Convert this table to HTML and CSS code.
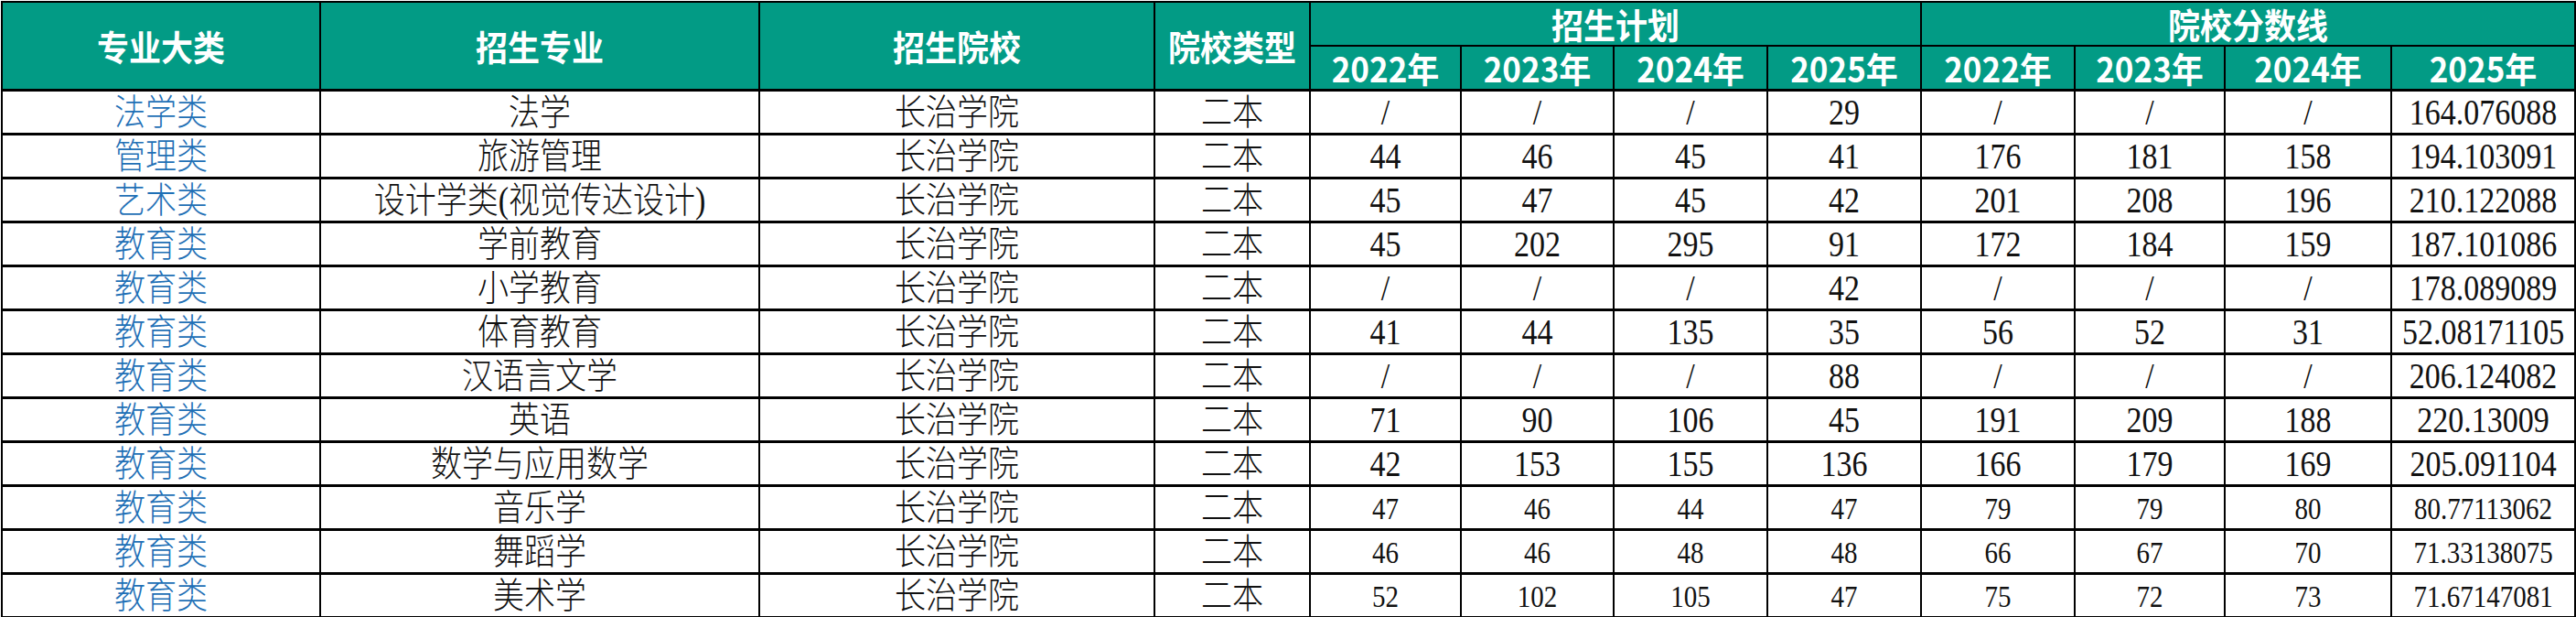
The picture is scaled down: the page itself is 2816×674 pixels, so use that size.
FILE: index.html
```html
<!DOCTYPE html>
<html lang="zh-CN">
<head>
<meta charset="utf-8">
<title>长治学院 招生计划与分数线</title>
<link rel="stylesheet" href="styles.css">
</head>
<body>
<table class="grid">
  <colgroup>
    <col class="c-cat"><col class="c-major"><col class="c-school"><col class="c-type">
    <col class="c-p1"><col class="c-p2"><col class="c-p3"><col class="c-p4">
    <col class="c-s1"><col class="c-s2"><col class="c-s3"><col class="c-s4">
  </colgroup>
  <thead>
    <tr>
      <th rowspan="2"><span class="t">专业大类</span></th>
      <th rowspan="2"><span class="t">招生专业</span></th>
      <th rowspan="2"><span class="t">招生院校</span></th>
      <th rowspan="2"><span class="t">院校类型</span></th>
      <th colspan="4"><span class="t">招生计划</span></th>
      <th colspan="4"><span class="t">院校分数线</span></th>
    </tr>
    <tr>
      <th><span class="t">2022年</span></th>
      <th><span class="t">2023年</span></th>
      <th><span class="t">2024年</span></th>
      <th><span class="t">2025年</span></th>
      <th><span class="t">2022年</span></th>
      <th><span class="t">2023年</span></th>
      <th><span class="t">2024年</span></th>
      <th><span class="t">2025年</span></th>
    </tr>
  </thead>
  <tbody>
    <tr><td class="cat"><span class="t">法学类</span></td><td><span class="t">法学</span></td><td><span class="t">长治学院</span></td><td><span class="t">二本</span></td><td class="n"><span class="t">/</span></td><td class="n"><span class="t">/</span></td><td class="n"><span class="t">/</span></td><td class="n"><span class="t">29</span></td><td class="n"><span class="t">/</span></td><td class="n"><span class="t">/</span></td><td class="n"><span class="t">/</span></td><td class="n"><span class="t">164.076088</span></td></tr>
    <tr><td class="cat"><span class="t">管理类</span></td><td><span class="t">旅游管理</span></td><td><span class="t">长治学院</span></td><td><span class="t">二本</span></td><td class="n"><span class="t">44</span></td><td class="n"><span class="t">46</span></td><td class="n"><span class="t">45</span></td><td class="n"><span class="t">41</span></td><td class="n"><span class="t">176</span></td><td class="n"><span class="t">181</span></td><td class="n"><span class="t">158</span></td><td class="n"><span class="t">194.103091</span></td></tr>
    <tr><td class="cat"><span class="t">艺术类</span></td><td><span class="t">设计学类(视觉传达设计)</span></td><td><span class="t">长治学院</span></td><td><span class="t">二本</span></td><td class="n"><span class="t">45</span></td><td class="n"><span class="t">47</span></td><td class="n"><span class="t">45</span></td><td class="n"><span class="t">42</span></td><td class="n"><span class="t">201</span></td><td class="n"><span class="t">208</span></td><td class="n"><span class="t">196</span></td><td class="n"><span class="t">210.122088</span></td></tr>
    <tr><td class="cat"><span class="t">教育类</span></td><td><span class="t">学前教育</span></td><td><span class="t">长治学院</span></td><td><span class="t">二本</span></td><td class="n"><span class="t">45</span></td><td class="n"><span class="t">202</span></td><td class="n"><span class="t">295</span></td><td class="n"><span class="t">91</span></td><td class="n"><span class="t">172</span></td><td class="n"><span class="t">184</span></td><td class="n"><span class="t">159</span></td><td class="n"><span class="t">187.101086</span></td></tr>
    <tr><td class="cat"><span class="t">教育类</span></td><td><span class="t">小学教育</span></td><td><span class="t">长治学院</span></td><td><span class="t">二本</span></td><td class="n"><span class="t">/</span></td><td class="n"><span class="t">/</span></td><td class="n"><span class="t">/</span></td><td class="n"><span class="t">42</span></td><td class="n"><span class="t">/</span></td><td class="n"><span class="t">/</span></td><td class="n"><span class="t">/</span></td><td class="n"><span class="t">178.089089</span></td></tr>
    <tr><td class="cat"><span class="t">教育类</span></td><td><span class="t">体育教育</span></td><td><span class="t">长治学院</span></td><td><span class="t">二本</span></td><td class="n"><span class="t">41</span></td><td class="n"><span class="t">44</span></td><td class="n"><span class="t">135</span></td><td class="n"><span class="t">35</span></td><td class="n"><span class="t">56</span></td><td class="n"><span class="t">52</span></td><td class="n"><span class="t">31</span></td><td class="n"><span class="t">52.08171105</span></td></tr>
    <tr><td class="cat"><span class="t">教育类</span></td><td><span class="t">汉语言文学</span></td><td><span class="t">长治学院</span></td><td><span class="t">二本</span></td><td class="n"><span class="t">/</span></td><td class="n"><span class="t">/</span></td><td class="n"><span class="t">/</span></td><td class="n"><span class="t">88</span></td><td class="n"><span class="t">/</span></td><td class="n"><span class="t">/</span></td><td class="n"><span class="t">/</span></td><td class="n"><span class="t">206.124082</span></td></tr>
    <tr><td class="cat"><span class="t">教育类</span></td><td><span class="t">英语</span></td><td><span class="t">长治学院</span></td><td><span class="t">二本</span></td><td class="n"><span class="t">71</span></td><td class="n"><span class="t">90</span></td><td class="n"><span class="t">106</span></td><td class="n"><span class="t">45</span></td><td class="n"><span class="t">191</span></td><td class="n"><span class="t">209</span></td><td class="n"><span class="t">188</span></td><td class="n"><span class="t">220.13009</span></td></tr>
    <tr><td class="cat"><span class="t">教育类</span></td><td><span class="t">数学与应用数学</span></td><td><span class="t">长治学院</span></td><td><span class="t">二本</span></td><td class="n"><span class="t">42</span></td><td class="n"><span class="t">153</span></td><td class="n"><span class="t">155</span></td><td class="n"><span class="t">136</span></td><td class="n"><span class="t">166</span></td><td class="n"><span class="t">179</span></td><td class="n"><span class="t">169</span></td><td class="n"><span class="t">205.091104</span></td></tr>
    <tr class="small"><td class="cat"><span class="t">教育类</span></td><td><span class="t">音乐学</span></td><td><span class="t">长治学院</span></td><td><span class="t">二本</span></td><td class="n"><span class="t">47</span></td><td class="n"><span class="t">46</span></td><td class="n"><span class="t">44</span></td><td class="n"><span class="t">47</span></td><td class="n"><span class="t">79</span></td><td class="n"><span class="t">79</span></td><td class="n"><span class="t">80</span></td><td class="n"><span class="t">80.77113062</span></td></tr>
    <tr class="small"><td class="cat"><span class="t">教育类</span></td><td><span class="t">舞蹈学</span></td><td><span class="t">长治学院</span></td><td><span class="t">二本</span></td><td class="n"><span class="t">46</span></td><td class="n"><span class="t">46</span></td><td class="n"><span class="t">48</span></td><td class="n"><span class="t">48</span></td><td class="n"><span class="t">66</span></td><td class="n"><span class="t">67</span></td><td class="n"><span class="t">70</span></td><td class="n"><span class="t">71.33138075</span></td></tr>
    <tr class="small"><td class="cat"><span class="t">教育类</span></td><td><span class="t">美术学</span></td><td><span class="t">长治学院</span></td><td><span class="t">二本</span></td><td class="n"><span class="t">52</span></td><td class="n"><span class="t">102</span></td><td class="n"><span class="t">105</span></td><td class="n"><span class="t">47</span></td><td class="n"><span class="t">75</span></td><td class="n"><span class="t">72</span></td><td class="n"><span class="t">73</span></td><td class="n"><span class="t">71.67147081</span></td></tr>
  </tbody>
</table>
</body>
</html>
```

FILE: styles.css
```css
html, body {
  margin: 0;
  padding: 0;
  background: #ffffff;
}

.grid {
  border-collapse: collapse;
  table-layout: fixed;
  width: 2813px;
  margin-left: 1px;
  margin-top: 1px;
}

.c-cat { width: 348px; }
.c-major { width: 480px; }
.c-school { width: 432px; }
.c-type { width: 170px; }
.c-p1 { width: 165px; }
.c-p2 { width: 167px; }
.c-p3 { width: 168px; }
.c-p4 { width: 168px; }
.c-s1 { width: 168px; }
.c-s2 { width: 164px; }
.c-s3 { width: 182px; }
.c-s4 { width: 201px; }

.grid th,
.grid td {
  border: 2px solid #000000;
  padding: 0;
  text-align: center;
  vertical-align: middle;
  overflow: visible;
  white-space: nowrap;
}

.grid th {
  height: 46px;
  background: #029b85;
  color: #ffffff;
  font-family: "Noto Sans CJK SC", "Noto Sans", sans-serif;
  font-weight: 700;
  font-size: 35px;
  line-height: 30px;
}

.grid td {
  height: 45px;
  border-top-width: 3px;
  border-bottom-width: 3px;
  color: #111111;
  font-family: "Liberation Serif", "Noto Sans CJK SC", serif;
  font-size: 34px;
  line-height: 28px;
  font-weight: 300;
}

.grid td.cat {
  color: #1f70b6;
}

.grid td.n {
  font-size: 34px;
}

.grid tr.small td.n {
  font-size: 29px;
}

.t {
  display: inline-block;
  transform: scaleY(1.15);
  transform-origin: center;
}

.grid th .t {
  transform: scaleY(1.08);
}
```
